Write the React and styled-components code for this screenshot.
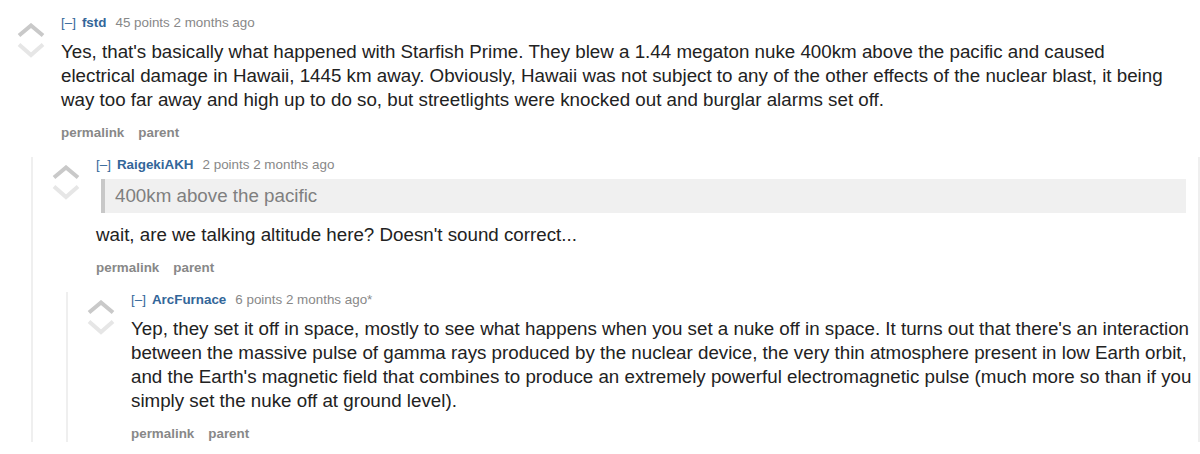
import React from "react";
import styled, { createGlobalStyle } from "styled-components";

const GlobalStyle = createGlobalStyle`
  * {
    box-sizing: border-box;
  }

  body {
    margin: 0;
    background: #ffffff;
    font-family: "Liberation Sans", Arial, sans-serif;
    color: #222222;
    overflow: hidden;
  }
`;

const thread = {
  author: "fstd",
  score: "45 points",
  age: "2 months ago",
  body: [
    {
      text:
        "Yes, that's basically what happened with Starfish Prime. They blew a 1.44 megaton nuke 400km above the pacific and caused electrical damage in Hawaii, 1445 km away. Obviously, Hawaii was not subject to any of the other effects of the nuclear blast, it being way too far away and high up to do so, but streetlights were knocked out and burglar alarms set off.",
    },
  ],
  children: [
    {
      author: "RaigekiAKH",
      score: "2 points",
      age: "2 months ago",
      body: [
        { quote: "400km above the pacific" },
        { text: "wait, are we talking altitude here? Doesn't sound correct..." },
      ],
      children: [
        {
          author: "ArcFurnace",
          score: "6 points",
          age: "2 months ago*",
          body: [
            {
              text:
                "Yep, they set it off in space, mostly to see what happens when you set a nuke off in space. It turns out that there's an interaction between the massive pulse of gamma rays produced by the nuclear device, the very thin atmosphere present in low Earth orbit, and the Earth's magnetic field that combines to produce an extremely powerful electromagnetic pulse (much more so than if you simply set the nuke off at ground level).",
            },
          ],
          children: [],
        },
      ],
    },
  ],
};

const Page = styled.div`
  width: 1200px;
  padding-top: 15px;
`;

const CommentBox = styled.div`
  padding-left: 17px;
`;

const Row = styled.div`
  display: flex;
  align-items: flex-start;
`;

const Votes = styled.div`
  flex: 0 0 28px;
  margin-top: 8px;
  margin-right: 16px;

  svg {
    display: block;
  }
`;

const Entry = styled.div`
  flex: 1;
  min-width: 0;
`;

const Tagline = styled.div`
  font-size: 13.4px;
  line-height: 16px;
  color: #888888;
  white-space: nowrap;
`;

const Expand = styled.span`
  color: #336699;
  margin-right: 6px;
`;

const Author = styled.span`
  color: #336699;
  font-weight: bold;
  margin-right: 9px;
`;

const Body = styled.div`
  margin-top: 5px;
  max-width: 1115px;
  display: flow-root;
`;

const Paragraph = styled.p`
  margin: 4px 0 6px;
  font-size: 18.75px;
  line-height: 24px;
  color: #222222;
`;

const Quote = styled.blockquote`
  margin: 1px 12px 10px 5px;
  padding: 5px 10px;
  border-left: 4px solid #c8c8c8;
  background: #f0f0f0;
  color: #7f7f7f;
  font-size: 18.75px;
  line-height: 24px;
`;

const Buttons = styled.ul`
  list-style: none;
  margin: 7px 0 0;
  padding: 0;
  display: flex;
  gap: 14px;
`;

const Button = styled.li`
  font-size: 13.4px;
  line-height: 16px;
  font-weight: bold;
  color: #888888;
`;

const Children = styled.div`
  margin: 16px 0 0 14px;
  padding-left: 2px;
  border-left: 2px solid #efefef;
  border-right: ${({ $edge }) => ($edge ? "2px solid #efefef" : "none")};
`;

function VoteArrows() {
  return (
    <svg width="28" height="35" viewBox="0 0 28 35">
      <polyline
        points="2,12.5 14,2.5 26,12.5"
        fill="none"
        stroke="#c9c9c9"
        strokeWidth="4"
      />
      <polyline
        points="2,21.5 14,32 26,21.5"
        fill="none"
        stroke="#e6e6e6"
        strokeWidth="4"
      />
    </svg>
  );
}

function Comment({ comment, depth }) {
  return (
    <CommentBox>
      <Row>
        <Votes>
          <VoteArrows />
        </Votes>
        <Entry>
          <Tagline>
            <Expand>[–]</Expand>
            <Author>{comment.author}</Author>
            {comment.score} {comment.age}
          </Tagline>
          <Body>
            {comment.body.map((part, i) =>
              part.quote ? (
                <Quote key={i}>{part.quote}</Quote>
              ) : (
                <Paragraph key={i}>{part.text}</Paragraph>
              )
            )}
          </Body>
          <Buttons>
            <Button>permalink</Button>
            <Button>parent</Button>
          </Buttons>
        </Entry>
      </Row>
      {comment.children.length > 0 && (
        <Children $edge={depth === 0}>
          {comment.children.map((child) => (
            <Comment key={child.author} comment={child} depth={depth + 1} />
          ))}
        </Children>
      )}
    </CommentBox>
  );
}

export default function App() {
  return (
    <>
      <GlobalStyle />
      <Page>
        <Comment comment={thread} depth={0} />
      </Page>
    </>
  );
}
